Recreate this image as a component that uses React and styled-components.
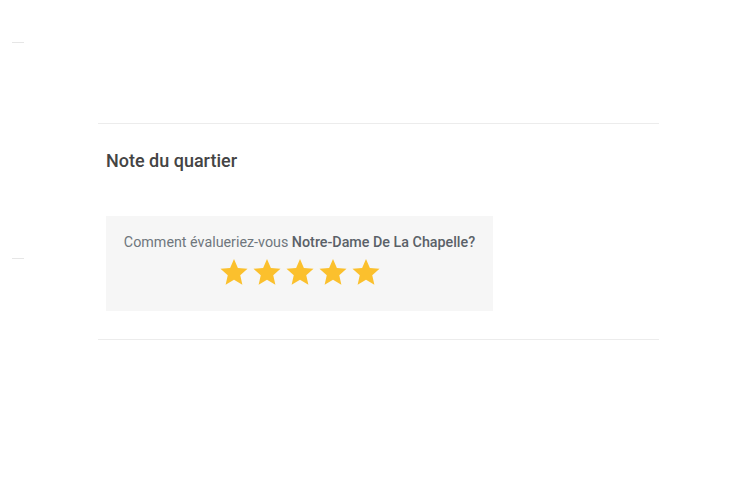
import React from "react";
import styled, { createGlobalStyle } from "styled-components";

const Global = createGlobalStyle`
  html, body { margin: 0; padding: 0; background: #fff; }
  body { font-family: Roboto, "Noto Sans", Arial, sans-serif; }
`;

const Page = styled.div`
  display: flex;
  width: 736px;
  height: 497px;
  overflow: hidden;
`;

const Side = styled.div`
  width: 98px;
  flex-shrink: 0;
  padding-top: 42px;
  padding-left: 12px;
  box-sizing: border-box;
  display: flex;
  flex-direction: column;
  gap: 215px;
`;

const Tick = styled.div`
  width: 12px;
  height: 1px;
  background: #e6e6e6;
`;

const Main = styled.div`
  width: 561px;
  padding-top: 123px;
`;

const Rule = styled.div`
  height: 1px;
  background: #ececec;
`;

const Section = styled.section`
  padding: 26px 8px 28px 8px;
`;

const Title = styled.h3`
  margin: 0 0 44px;
  font-size: 18px;
  line-height: 22px;
  font-weight: 500;
  color: #444;
`;

const RatingBox = styled.div`
  width: 387px;
  height: 95px;
  box-sizing: border-box;
  background: #f6f6f6;
  display: flex;
  flex-direction: column;
  align-items: center;
  padding-top: 18px;
`;

const Question = styled.div`
  font-size: 14.3px;
  line-height: 16px;
  color: #6f767d;
  b { font-weight: 500; color: #5a6168; }
`;

const Stars = styled.div`
  display: flex;
  gap: 3px;
  margin-top: 7px;
  margin-left: 0;
`;

const Star = ({ color = "#fbc02d" }) => (
  <svg width="30" height="30" viewBox="0 0 24 24">
    <path
      fill={color}
      d="M12 1.6l3.1 7.1 7.7.7-5.8 5.1 1.7 7.6L12 18.1l-6.7 4 1.7-7.6-5.8-5.1 7.7-.7z"
    />
  </svg>
);

export default function App() {
  return (
    <Page>
      <Global />
      <Side>
        <Tick />
        <Tick />
      </Side>
      <Main>
        <Rule />
        <Section>
          <Title>Note du quartier</Title>
          <RatingBox>
            <Question>
              Comment évalueriez-vous <b>Notre-Dame De La Chapelle?</b>
            </Question>
            <Stars>
              {[0, 1, 2, 3, 4].map((i) => (
                <Star key={i} />
              ))}
            </Stars>
          </RatingBox>
        </Section>
        <Rule />
      </Main>
    </Page>
  );
}
